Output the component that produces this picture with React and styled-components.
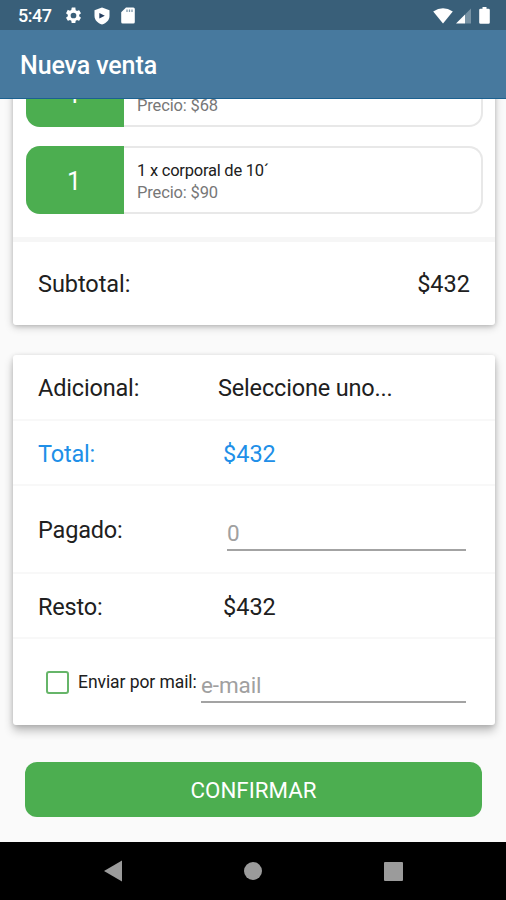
import React from 'react';
import styled, { createGlobalStyle } from 'styled-components';

const GlobalStyle = createGlobalStyle`
  * { box-sizing: border-box; }
  body { margin: 0; background: #fafafa; font-family: Roboto, sans-serif; }
`;

const Screen = styled.div`
  width: 506px;
  height: 900px;
  display: flex;
  flex-direction: column;
  overflow: hidden;
  background: #fafafa;
  color: #202020;
`;

const StatusBar = styled.header`
  height: 30px;
  flex: none;
  display: flex;
  align-items: center;
  padding: 1px 16px 0 18px;
  background: #395f79;
  color: #fff;
`;

const Clock = styled.span`
  width: 46px;
  font-size: 18px;
  line-height: 20px;
  font-weight: 500;
  letter-spacing: -0.45px;
`;

const StatusIcons = styled.div`
  display: flex;
  align-items: center;
  gap: ${(p) => p.$gap}px;
  margin-left: ${(p) => (p.$end ? 'auto' : '0')};
  svg { display: block; }
  svg:last-child { margin-left: ${(p) => (p.$end ? '5px' : '0')}; }
`;

const AppBar = styled.div`
  height: 69px;
  flex: none;
  display: flex;
  align-items: center;
  padding: 4px 20px 0;
  background: #47799e;
  border-bottom: 1px solid #1c6190;
`;

const Title = styled.h1`
  margin: 0;
  color: #fff;
  font-size: 25px;
  line-height: 30px;
  font-weight: 500;
  letter-spacing: -0.1px;
`;

const Scroller = styled.main`
  height: 743px;
  flex: none;
  display: flex;
  flex-direction: column;
  justify-content: flex-end;
  overflow: hidden;
  padding-bottom: 25px;
`;

const Card = styled.section`
  flex: none;
  width: 482px;
  margin: 0 0 ${(p) => p.$after}px 13px;
  background: #fff;
  border-radius: 3px;
  box-shadow: ${(p) => (p.$raised
    ? '0 6px 10px rgba(0,0,0,.24), 0 1px 5px rgba(0,0,0,.15)'
    : '0 2px 9px rgba(0,0,0,.22), 0 1px 4px rgba(0,0,0,.14)')};
`;

const Items = styled.div`
  display: flex;
  flex-direction: column;
  gap: 19px;
  padding: 0 12px 23px 13px;
  border-bottom: 5px solid #f6f6f6;
`;

const Item = styled.article`
  height: 68px;
  display: flex;
  border: 2px solid #e8e8e8;
  border-left: 0;
  border-radius: 14px;
`;

const Quantity = styled.div`
  width: 98px;
  height: 68px;
  margin: -2px 0;
  display: flex;
  align-items: center;
  justify-content: center;
  padding: 2px 2px 0 0;
  background: #4cae50;
  border-radius: 14px 0 0 14px;
  color: #fff;
  font-size: 25px;
`;

const ItemText = styled.div`
  display: flex;
  flex-direction: column;
  justify-content: flex-end;
  padding: 0 0 8px 13px;
  font-size: 16.5px;
  line-height: 22px;
`;

const ItemName = styled.div`
  letter-spacing: -0.23px;
`;

const Price = styled.div`
  color: #777;
  letter-spacing: -0.15px;
`;

const Row = styled.div`
  height: ${(p) => p.$height}px;
  display: flex;
  align-items: center;
  padding: 2px 29px 0 25px;
  border-bottom: ${(p) => (p.$last ? '0' : '2px solid #f8f8f8')};
  color: ${(p) => p.$color || '#202020'};
  font-size: 23.5px;
  line-height: 28px;
  letter-spacing: -0.17px;
`;

const Subtotal = styled(Row)`
  justify-content: space-between;
  padding-top: 1px;
  padding-right: 25px;
  letter-spacing: -0.05px;
`;

const Label = styled.span`
  width: ${(p) => p.$width}px;
  flex: none;
`;

const Amount = styled.span`
  letter-spacing: 0;
`;

const Field = styled.input`
  flex: 1;
  min-width: 0;
  height: ${(p) => p.$height}px;
  align-self: flex-start;
  margin: ${(p) => p.$top}px 0 0;
  padding: 0;
  border: 0;
  border-bottom: 2px solid #a3a3a3;
  border-radius: 0;
  outline: 0;
  background: transparent;
  font: 22.5px/28px Roboto, sans-serif;
  letter-spacing: -0.1px;
  &::placeholder { color: #a0a0a0; opacity: 1; }
`;

const Checkbox = styled.input.attrs({ type: 'checkbox' })`
  appearance: none;
  flex: none;
  width: 23px;
  height: 23px;
  margin: 0 9px 2px 8px;
  border: 2.5px solid #66b569;
  border-radius: 3px;
`;

const MailLabel = styled.label`
  width: 123px;
  flex: none;
  margin-bottom: 3px;
  font-size: 17.5px;
  line-height: 22px;
  letter-spacing: -0.07px;
  white-space: nowrap;
`;

const Confirm = styled.button`
  flex: none;
  width: 457px;
  height: 55px;
  margin-left: 25px;
  padding: 1px 0 0;
  border: 0;
  border-radius: 12px;
  background: #4cae50;
  color: #fff;
  font: 22.3px/28px Roboto, sans-serif;
`;

const NavBar = styled.nav`
  flex: 1;
  display: flex;
  justify-content: center;
  align-items: center;
  gap: 122px;
  background: #000;
  svg { display: block; }
`;

const Gear = () => (
  <svg width="19" height="19" viewBox="0 0 24 24" fill="#fff">
    <path d="M19.14 12.94c.04-.3.06-.61.06-.94s-.02-.64-.07-.94l2.03-1.58a.49.49 0 0 0 .12-.61l-1.92-3.32a.49.49 0 0 0-.59-.22l-2.39.96a7 7 0 0 0-1.62-.94l-.36-2.54A.48.48 0 0 0 13.92 2h-3.84a.47.47 0 0 0-.47.41l-.36 2.54c-.59.24-1.13.57-1.62.94l-2.39-.96a.48.48 0 0 0-.59.22L2.74 8.87a.47.47 0 0 0 .12.61l2.03 1.58c-.05.3-.09.63-.09.94s.02.64.07.94l-2.03 1.58a.49.49 0 0 0-.12.61l1.92 3.32c.12.22.37.29.59.22l2.39-.96c.5.38 1.03.7 1.62.94l.36 2.54c.05.24.24.41.48.41h3.84c.24 0 .44-.17.47-.41l.36-2.54a7 7 0 0 0 1.62-.94l2.39.96c.22.08.47 0 .59-.22l1.92-3.32a.47.47 0 0 0-.12-.61zM12 15.6A3.6 3.6 0 1 1 12 8.4a3.6 3.6 0 0 1 0 7.2" />
  </svg>
);

const Shield = () => (
  <svg width="16" height="18" viewBox="0 0 16 18">
    <path fill="#fff" d="M8 .5 15.5 3.3V9c0 4-3.2 7.300-7.500 8.500C3.700 16.300.5 13 .5 9V3.300z" />
    <path fill="#263f60" d="M5.300 6 10.800 8.700 5.300 11.500z" />
  </svg>
);

const SdCard = () => (
  <svg width="14" height="17" viewBox="0 0 14 17">
    <path fill="#fff" d="M5 .5h7.300q1.500 0 1.500 1.500v13q0 1.500-1.500 1.500H1.700Q.2 16.500.2 15V5.300z" />
    <path stroke="#7e99ab" strokeWidth="1.300" d="M6 2.500v2.500M8.500 2.500v2.500M11 2.500v2.500" />
  </svg>
);

const Wifi = () => (
  <svg width="20" height="16" viewBox="0 0 20 16">
    <path fill="#fff" d="M.2 3.500Q10-2.800 19.800 3.500L10 15.600z" />
  </svg>
);

const Signal = () => (
  <svg width="15" height="16" viewBox="0 0 15 16">
    <path fill="#7792a4" d="M9 6.500 15 .5v15H9z" />
    <path fill="#fff" d="M0 15.500 9 6.500v9z" />
  </svg>
);

const Battery = () => (
  <svg width="11" height="17" viewBox="0 0 11 17">
    <path fill="#fff" d="M3.500 0h4v1.700h2q1.300 0 1.300 1.300v12.500q0 1.300-1.300 1.300h-8Q.2 16.800.2 15.500V3q0-1.300 1.300-1.300h2z" />
  </svg>
);

const products = [
  { id: 'previous', price: '$68' },
  { id: 'corporal', name: '1 x corporal de 10´', price: '$90' },
];

export default function App() {
  return (
    <Screen>
      <GlobalStyle />
      <StatusBar>
        <Clock>5:47</Clock>
        <StatusIcons $gap={11}>
          <Gear />
          <Shield />
          <SdCard />
        </StatusIcons>
        <StatusIcons $gap={3} $end>
          <Wifi />
          <Signal />
          <Battery />
        </StatusIcons>
      </StatusBar>
      <AppBar><Title>Nueva venta</Title></AppBar>
      <Scroller>
        <Card $after={30}>
          <Items>
            {products.map((product) => (
              <Item key={product.id}>
                <Quantity>1</Quantity>
                <ItemText>
                  {product.name && <ItemName>{product.name}</ItemName>}
                  <Price>Precio: {product.price}</Price>
                </ItemText>
              </Item>
            ))}
          </Items>
          <Subtotal $height={83} $last>
            <span>Subtotal:</span>
            <Amount>$432</Amount>
          </Subtotal>
        </Card>
        <Card $after={37} $raised>
          <Row $height={66}>
            <Label $width={180}>Adicional:</Label>
            <span>Seleccione uno...</span>
          </Row>
          <Row $height={65} $color="#208fe8">
            <Label $width={185}>Total:</Label>
            <Amount>$432</Amount>
          </Row>
          <Row $height={88}>
            <Label $width={189}>Pagado:</Label>
            <Field $top={28} $height={35} placeholder="0" aria-label="Pagado" />
          </Row>
          <Row $height={65}>
            <Label $width={185}>Resto:</Label>
            <Amount>$432</Amount>
          </Row>
          <Row $height={86} $last>
            <Checkbox id="mail" />
            <MailLabel htmlFor="mail">Enviar por mail:</MailLabel>
            <Field $top={27} $height={35} placeholder="e-mail" aria-label="e-mail" />
          </Row>
        </Card>
        <Confirm>CONFIRMAR</Confirm>
      </Scroller>
      <NavBar>
        <svg width="18" height="22" viewBox="0 0 18 22"><path fill="#9b9b9b" d="M0 11 18 0.500v21z" /></svg>
        <svg width="18" height="18" viewBox="0 0 18 18"><circle cx="9" cy="9" r="9" fill="#9b9b9b" /></svg>
        <svg width="19" height="19" viewBox="0 0 19 19"><rect width="19" height="19" rx="1" fill="#9b9b9b" /></svg>
      </NavBar>
    </Screen>
  );
}
